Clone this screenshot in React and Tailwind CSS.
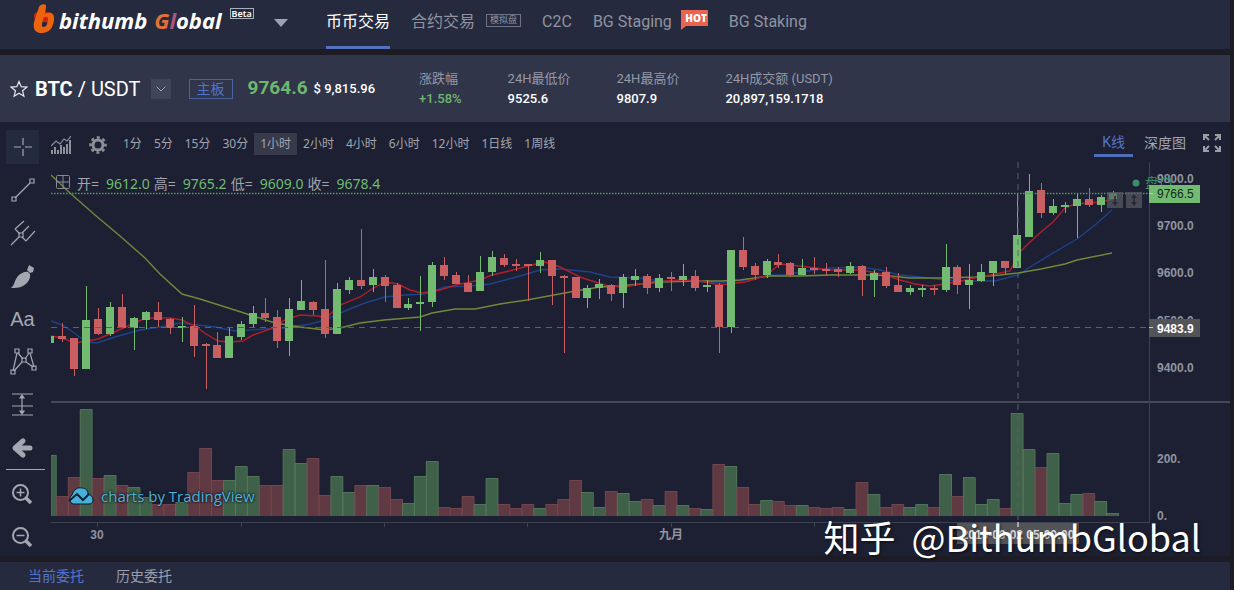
import React, { useState } from 'react'
import { clsx } from 'clsx'

const navFont = 'font-[Roboto,"Noto_Sans_CJK_SC",sans-serif]'
const uiFont = 'font-["Noto_Sans","Noto_Sans_CJK_SC",sans-serif]'

const intervals = ['1分', '5分', '15分', '30分', '1小时', '2小时', '4小时', '6小时', '12小时', '1日线', '1周线']

const stats = [
  { label: '涨跌幅', value: '+1.58%', up: true },
  { label: '24H最低价', value: '9525.6' },
  { label: '24H最高价', value: '9807.9' },
  { label: '24H成交额 (USDT)', value: '20,897,159.1718' },
]

const ohlc = [
  ['开', '9612.0'],
  ['高', '9765.2'],
  ['低', '9609.0'],
  ['收', '9678.4'],
]

// [up, high, low, top, bottom, volume top]
const candles = [
  [1, 336, 343, 336, 343, 455], [0, 323, 342, 336, 339, 496], [0, 338, 376, 338, 369, 477],
  [1, 286, 369, 320, 369, 409], [0, 308, 335, 319, 334, 478], [1, 302, 336, 307, 334, 475],
  [0, 294, 328, 307, 328, 485], [1, 317, 350, 318, 328, 487], [1, 311, 329, 312, 320, 497],
  [0, 302, 327, 312, 320, 504], [0, 318, 334, 319, 328, 504], [1, 317, 342, 326, 328, 502],
  [0, 305, 357, 326, 346, 472], [0, 343, 389, 344, 346, 448], [0, 332, 358, 345, 358, 480],
  [1, 327, 358, 336, 358, 480], [1, 321, 340, 324, 337, 466], [1, 306, 327, 313, 324, 476],
  [0, 298, 322, 313, 318, 485], [0, 310, 348, 317, 341, 485], [1, 298, 356, 309, 341, 449],
  [1, 280, 310, 301, 310, 463], [0, 301, 315, 302, 310, 458], [0, 260, 338, 309, 334, 495],
  [1, 283, 334, 289, 334, 476], [1, 277, 294, 280, 290, 492], [0, 229, 289, 280, 286, 485],
  [1, 269, 292, 277, 285, 485], [0, 275, 302, 277, 286, 487], [0, 283, 308, 285, 308, 499],
  [1, 298, 310, 304, 308, 503], [1, 276, 331, 302, 304, 476], [1, 262, 307, 265, 302, 461],
  [0, 257, 280, 265, 276, 507], [0, 272, 284, 275, 284, 508], [0, 275, 292, 283, 292, 496],
  [1, 256, 291, 272, 291, 504], [1, 251, 276, 257, 272, 478], [0, 254, 267, 258, 265, 504],
  [0, 259, 271, 264, 266, 508], [0, 264, 301, 264, 266, 504], [1, 252, 273, 260, 266, 508],
  [0, 260, 305, 260, 276, 504], [0, 275, 353, 276, 278, 499], [0, 277, 298, 277, 298, 480],
  [1, 285, 308, 288, 298, 492], [1, 279, 299, 284, 288, 507], [0, 284, 301, 285, 294, 491],
  [1, 274, 308, 277, 293, 493], [1, 269, 286, 276, 280, 501], [0, 274, 294, 276, 288, 499],
  [1, 274, 292, 278, 288, 505], [0, 272, 291, 277, 279, 491], [1, 264, 286, 276, 280, 505],
  [0, 270, 291, 276, 288, 508], [1, 280, 292, 285, 287, 509], [0, 283, 353, 285, 327, 464],
  [1, 250, 333, 250, 327, 466], [0, 237, 270, 250, 267, 487], [0, 263, 280, 266, 275, 504],
  [1, 259, 278, 261, 275, 500], [0, 254, 268, 262, 265, 501], [0, 262, 277, 263, 275, 505],
  [1, 259, 275, 268, 275, 505], [0, 257, 274, 268, 270, 507], [0, 263, 276, 269, 271, 508],
  [0, 267, 277, 269, 272, 507], [1, 262, 274, 266, 273, 509], [0, 265, 296, 266, 280, 482],
  [1, 270, 297, 273, 280, 494], [0, 267, 288, 272, 286, 507], [0, 273, 292, 285, 292, 504],
  [1, 285, 295, 288, 292, 507], [1, 285, 297, 288, 289, 504], [0, 285, 295, 288, 290, 507],
  [1, 244, 292, 267, 290, 474], [0, 265, 294, 267, 285, 496], [1, 264, 309, 280, 285, 477],
  [1, 264, 282, 272, 281, 504], [1, 261, 286, 261, 273, 499], [0, 261, 275, 261, 268, 508],
  [1, 193, 268, 235, 268, 413], [1, 174, 237, 191, 237, 449], [0, 183, 218, 190, 213, 467],
  [1, 199, 215, 206, 213, 453], [1, 202, 213, 205, 207, 503], [1, 193, 238, 199, 206, 494],
  [0, 188, 207, 199, 205, 493], [1, 195, 212, 197, 205, 501], [1, 191, 199, 193, 199, 513],
]

const slow = '51,175 70,193 95,215 120,236 145,258 160,274 182,294 200,299 241,312 253,316 275,323 300,327 325,330 340,328 360,323 384,320 420,317 432,313 455,309 475,309 500,304 527,300 570,292 600,287 620,286 660,282 700,281 720,281 740,280 770,276 800,276 830,275 874,275 890,276 910,278 940,278 975,277 1000,275 1018,273 1041,269 1065,264 1077,260 1112,253'
const fast = '51,336 62,338 75,343 98,339 110,334 130,325 146,318 170,318 182,320 195,326 206,334 218,341 230,342 243,341 253,335 270,329 285,320 300,315 318,316 326,318 340,305 360,297 372,289 385,282 398,284 410,290 422,293 440,290 456,285 480,280 492,275 505,272 528,266 545,262 560,267 580,277 592,281 608,286 625,287 650,282 680,280 700,281 720,285 745,282 765,276 780,264 800,266 830,270 860,270 872,272 885,275 900,280 915,284 930,286 945,284 975,278 995,274 1010,271 1020,252 1029,243 1041,232 1053,222 1065,208 1075,204 1101,202 1113,199'
const mid = '51,321 62,325 73,332 85,341 97,343 115,337 140,330 160,327 180,323 215,327 235,331 265,329 285,328 310,324 325,320 345,311 365,303 385,297 405,295 425,294 445,287 470,286 490,284 520,276 540,270 560,269 590,272 610,277 640,278 660,281 690,281 720,283 745,280 770,275 785,275 800,272 830,268 860,267 880,270 900,275 920,277 945,280 965,281 995,281 1018,275 1030,267 1053,253 1077,239 1095,225 1112,210'

const xAt = (i) => 50.4 + i * 11.935

const tools = [
  { name: '十字线', icon: <path d="M14 5v7M14 16v7M5 14h7M16 14h7" /> },
  { name: '趋势线', icon: <><path d="M6 22 21 7" /><path d="M3 21h4v4H3zM21 3h4v4h-4z" /></> },
  { name: '叉形线', icon: <><path d="M2 26l8-8M13 14l7-7M6 10l9-8M6 10l5 5M13 18l4 4 9-10" /><path d="M10 14h4v4h-4z" /></> },
  { name: '画笔', icon: <><path fill="currentColor" stroke="none" d="M2 26c4-3 3-8 8-13 3-2 6-4 9-3l2 2c1 4-2 9-7 12-4 2-8 2-12 2z" /><path fill="currentColor" stroke="none" d="M18 8l2-5 5 3-1 4-3 1z" /></> },
  { name: '文字' },
  { name: '形态', icon: <><path d="M8 5 4 23M9 5l5 6M20 5l-4 6M21 5l4 14M17 14l7 5M13 14l-8 9" /><path d="M6 1h4v4H6zM19 1h4v4h-4zM13 10h4v4h-4zM2 22h4v4H2zM23 18h4v4h-4z" /></> },
  { name: '测量', icon: <><path d="M3 3h21M3 15h21M3 24h21M13 5v17" /><path fill="currentColor" d="M13 4l2 3h-4zM13 23l2-3h-4z" /></> },
  { name: '返回', icon: <path strokeWidth="5" strokeLinecap="round" strokeLinejoin="round" d="M14 7l-8 7 8 7M7 14h14" /> },
]

function ToolIcon({ children }) {
  return (
    <svg width="28" height="28" viewBox="0 0 28 28" fill="none" stroke="currentColor" strokeWidth="1.2" aria-hidden="true">
      {children}
    </svg>
  )
}

function Logo() {
  return (
    <a href="#" className="flex items-center" aria-label="bithumb Global">
      <svg width="22" height="30" viewBox="0 0 22 30" aria-hidden="true">
        <path d="M1 12c0-4 4-4 9-4s12 0 11 7c-1 5-6 3-11 3S1 17 1 12z" fill="#d3200f" />
        <path fillRule="evenodd" d="M6 3c1-3 8-4 7 0l-1 7c5-3 10-1 9 6-1 8-5 13-12 13-8 0-9-5-8-11zM10 15l-1 5c-1 4 4 4 5 0l1-4c1-4-4-4-5-1z" fill="#ec6310" />
      </svg>
      <span className="ml-1 mt-0.5 flex gap-[7px] font-['Open_Sans',sans-serif] text-[22px] leading-7 font-bold italic text-white">
        <span>bithumb</span>
        <span><span className="text-[#e2703a]">G</span><span className="text-[#a9587a]">l</span>obal</span>
      </span>
      <span className="mb-3 ml-2 border border-[#a9aebb] px-px font-['Noto_Sans',sans-serif] text-[9px] leading-[9px] font-semibold text-white">Beta</span>
    </a>
  )
}

function Header() {
  return (
    <header className="flex h-[49px] items-start bg-[#262a3e] pl-[33px]">
      <div className="flex w-[293px] items-center pt-1">
        <Logo />
        <button aria-label="切换站点" className="mt-2 ml-5">
          <svg width="14" height="8" viewBox="0 0 14 8" className="fill-[#9da2b0]"><path d="M0 0h14L7 8z" /></svg>
        </button>
      </div>
      <nav className={clsx('flex h-[49px] text-base leading-6 text-[#8f93a1]', navFont)}>
        <a href="#" className="border-b-[3px] border-[#5272c0] pt-2.5 text-white">币币交易</a>
        <a href="#" className="ml-[21px] flex items-start pt-2.5">
          合约交易
          <span className="mt-1 ml-[11px] border border-[#6e7383] px-[3px] text-[9px] leading-[11px]">模拟盘</span>
        </a>
        <a href="#" className="ml-[21px] pt-2.5">C2C</a>
        <a href="#" className="ml-[21px] flex items-start pt-2.5">
          BG Staging
          <span className="relative ml-[9px] flex h-5 w-[27px] justify-end">
            <svg className="absolute inset-0" width="27" height="20" viewBox="0 0 27 20" aria-hidden="true"><path d="M0 0h27v16H5l-5 4z" fill="#ea6351" /></svg>
            <span className="relative pr-px font-['Open_Sans',sans-serif] text-[10px] leading-4 font-extrabold text-white">HOT</span>
          </span>
        </a>
        <a href="#" className="ml-[21px] pt-2.5">BG Staking</a>
      </nav>
    </header>
  )
}

function Ticker() {
  return (
    <section className={clsx('flex h-[67px] items-center bg-[#30354a] pl-2.5 text-white', navFont)}>
      <button aria-label="收藏">
        <svg width="18" height="18" viewBox="0 0 18 18" fill="none" stroke="#e3e5ea" strokeWidth="1.2"><path d="M9 1.5l2.2 5.2 5.6.4-4.300 3.600 1.400 5.500L9 13.200l-4.900 3 1.400-5.500L1.200 7.100l5.600-.4z" /></svg>
      </button>
      <h1 className="ml-[7px] text-xl whitespace-pre"><b>BTC</b> / USDT</h1>
      <button aria-label="选择交易对" className="ml-2.5 flex size-5 items-center justify-center bg-[#404559]">
        <svg width="10" height="6" viewBox="0 0 10 6" fill="none" stroke="#9ba0ae"><path d="M.5.5 5 5 9.500.5" /></svg>
      </button>
      <span className="ml-[18px] border border-[#4a649f] px-[7px] text-sm leading-[18px] text-[#5474cb]">主板</span>
      <strong className="ml-[15px] text-[19px] font-bold text-[#6fb76f]">9764.6</strong>
      <span className="ml-1.5 text-[13px] font-medium">$ 9,815.96</span>
      <dl className="ml-11 flex gap-[46px] text-[13px] leading-5">
        {stats.map(s => (
          <div key={s.label}>
            <dt className="text-[#9499a8]">{s.label}</dt>
            <dd className={clsx('font-medium', s.up && 'text-[#6fb76f]')}>{s.value}</dd>
          </div>
        ))}
      </dl>
    </section>
  )
}

function ToolColumn() {
  return (
    <div className="flex w-[51px] shrink-0 flex-col pt-[3px] pr-1.5 text-[#a4a7b1]">
      {tools.map((t, i) => (
        <button key={t.name} aria-label={t.name} className="flex h-[43px] items-center pl-1.5">
          <span className={clsx('flex h-[34px] w-[33px] items-center justify-center', i === 0 && 'bg-[#252b3f]')}>
            {t.icon ? <ToolIcon>{t.icon}</ToolIcon> : <span className="font-['Liberation_Sans',Arial,sans-serif] text-xl leading-6">Aa</span>}
          </span>
        </button>
      ))}
      <hr className="ml-1.5 border-[#a4a7b1]" />
      {['放大', '缩小'].map((name, i) => (
        <button key={name} aria-label={name} className="flex h-[43px] items-center pt-1 pl-[11px]">
          <svg width="22" height="22" viewBox="0 0 22 22" fill="none" stroke="currentColor" aria-hidden="true">
            <circle cx="9.500" cy="9.500" r="7.500" strokeWidth="2" />
            <path d="M15 15l5 5" strokeWidth="3.500" />
            <path d={i === 0 ? 'M5.500 9.500h8M9.500 5.500v8' : 'M5.500 9.500h8'} strokeWidth="1.500" />
          </svg>
        </button>
      ))}
    </div>
  )
}

function Toolbar() {
  const [active, setActive] = useState('1小时')
  return (
    <div className={clsx('flex h-[38px] items-center text-xs text-[#a2a5b0]', uiFont)}>
      <button aria-label="指标" className="mt-2">
        <svg width="20" height="19" viewBox="0 0 20 19" fill="none" stroke="#8d9099" aria-hidden="true">
          <path d="M1 18v-4M4 18v-7M7 18v-4M10 18V9M13 18v-7M16 18V8M19 18V4" strokeWidth="2" />
          <path d="M0 10l5-5 4 3 4-5 3 2 4-5" strokeWidth="1.200" />
        </svg>
      </button>
      <button aria-label="设置" className="mt-2 mr-2.5 ml-[18px]">
        <svg width="18" height="18" viewBox="0 0 18 18" fill="none" stroke="#8d9099" aria-hidden="true">
          <circle cx="9" cy="9" r="5" strokeWidth="3" />
          <circle cx="9" cy="9" r="7.500" strokeWidth="2.500" strokeDasharray="3 2.890" strokeDashoffset="1.500" />
        </svg>
      </button>
      <div className="flex pt-1.5">
        {intervals.map(v => (
          <button key={v} onClick={() => setActive(v)} className={clsx('h-[22px] px-1.5', active === v && 'bg-[#363a4a]')}>
            {v}
          </button>
        ))}
      </div>
      <div className={clsx('mr-2 ml-auto flex items-center pt-1 text-sm', navFont)}>
        <button className="border-b-[3px] border-[#4f6db8] px-2 leading-6 text-[#5474cb]">K线</button>
        <button className="ml-[11px] leading-6 text-[#a2a5b0]">深度图</button>
        <button aria-label="全屏" className="ml-4">
          <svg width="20" height="20" viewBox="0 0 20 20" fill="none" stroke="#9a9da6" strokeWidth="2" aria-hidden="true">
            <path d="M2 7V2h5M2 2l5 5M13 2h5v5M18 2l-5 5M2 13v5h5M2 18l5-5M13 18h5v-5M18 18l-5-5" />
          </svg>
        </button>
      </div>
    </div>
  )
}

function Chart() {
  return (
    <svg viewBox="51 160 1179 396" className="block h-auto w-full font-['Liberation_Sans',Arial,'Noto_Sans_CJK_SC',sans-serif]" role="img" aria-label="BTC/USDT 1小时 K线">
      <g shapeRendering="crispEdges">
        {candles.map(([up, , , , , v], i) => {
          const x = Math.max(51, xAt(i) - 6)
          const w = xAt(i) + 6 - x
          return <rect key={i} x={x} y={v} width={w} height={516 - v} fill={up ? '#3f6149' : '#603a43'} />
        })}
      </g>
      <g fill="none" strokeWidth="1">
        {candles.map(([up, , , , , v], i) => {
          const x = Math.max(51, xAt(i) - 6)
          return <path key={i} d={`M${x} 516V${v + 0.5}H${xAt(i) + 6}V516`} stroke={up ? '#54795b' : '#764650'} strokeOpacity="0.8" />
        })}
      </g>

      <g fill="none" strokeWidth="1.400">
        <polyline points={mid} stroke="#1d4289" />
        <polyline points={slow} stroke="#6f8839" />
        <polyline points={fast} stroke="#b01e2b" />
      </g>
      {candles.map(([up, high, low, top, bottom], i) => {
        const x = Math.round(xAt(i))
        const left = Math.max(51, x - 4)
        return (
          <g key={i} fill={up ? '#72bb70' : '#c95f60'} shapeRendering="crispEdges">
            {i > 0 && <rect x={x} y={high} width="1" height={low - high} />}
            <rect x={left} y={top} width={i === 0 ? 3 : 8} height={Math.max(2, bottom - top)} />
          </g>
        )
      })}

      <path d="M51 193.500H1149" stroke="#5a9467" strokeWidth="1.500" strokeDasharray="1.500 1.500" />
      <path d="M51 327.500H1149" stroke="#5b606f" strokeDasharray="6 5" />
      <path d="M1018 162V522" stroke="#5b606f" strokeDasharray="6 5" />
      <path d="M51 402H1230" stroke="#454a59" strokeWidth="2" />
      <path d="M51 522.500H1150M1149.500 162V522M97.500 522v5M241.500 522v5M384.500 522v5M527.500 522v5M671.500 522v5M814.500 522v5" stroke="#3d4252" />

      <g fill="#5a5c64" fillOpacity="0.7">
        <rect x="1107" y="192" width="16" height="16" />
        <rect x="1126" y="192" width="16" height="16" />
      </g>
      <path d="M1115 196v7M1134 195v10" stroke="#272a36" strokeWidth="1.500" />
      <path d="M1112 202h6l-3 4zM1131 198l3-4 3 4zM1131 202h6l-3 4z" fill="#272a36" />

      <g className="fill-[#9094a0] text-xs font-bold">
        <text x="1157" y="183">9800.0</text>
        <text x="1157" y="230">9700.0</text>
        <text x="1157" y="277">9600.0</text>
        <text x="1157" y="325">9500.0</text>
        <text x="1157" y="372">9400.0</text>
        <text x="1157" y="463">200.</text>
        <text x="1157" y="520">0.</text>
        <text x="97" y="539" textAnchor="middle">30</text>
        <text x="671" y="539" textAnchor="middle">九月</text>
      </g>
      <circle cx="1136" cy="183" r="3.500" fill="#3b8d67" />
      <text x="1145" y="188" className="fill-[#3b8d67] text-sm">盘口</text>
      <rect x="1149" y="185" width="51" height="18" fill="#72bb70" />
      <text x="1157" y="198" className="fill-[#16281c] text-xs">9766.5</text>
      <rect x="1149" y="319" width="51" height="18" fill="#535457" />
      <text x="1157" y="333" className="fill-white text-xs font-bold">9483.9</text>
      <path d="M1149 193.500h4M1149 327.500h4" stroke="#c5c7cc" />
      <rect x="957" y="523" width="122" height="21" fill="#535457" />
      <text x="1018" y="539" textAnchor="middle" className="fill-[#dcdde0] text-xs font-bold">2019-09-02 05:00:00</text>
      <path d="M1018 522v5" stroke="#fff" />
    </svg>
  )
}

function Legend() {
  return (
    <div className={clsx('absolute top-3 left-1 flex items-center text-sm leading-6 text-[#a2a5b0]', uiFont)}>
      <svg width="16" height="16" viewBox="0 0 16 16" fill="none" stroke="#858994" className="mr-1.5 mb-1" aria-hidden="true">
        <rect x="1.500" y="1.500" width="13" height="13" rx="1" />
        <path d="M8 2v12M2 8h12" />
      </svg>
      {ohlc.map(([k, v]) => (
        <span key={k} className="mr-1 flex gap-[7px]">{k}=<span className="text-[#72bb70]">{v}</span></span>
      ))}
    </div>
  )
}

function Attribution() {
  return (
    <a href="#" className="absolute bottom-12 left-[15px] flex items-center gap-[7px] font-['Open_Sans',sans-serif] text-[15px] leading-6 text-[#4fb2d8] [text-shadow:0_0_3px_#10131f,0_0_2px_#10131f]">
      <svg width="28" height="20" viewBox="0 0 28 20" aria-hidden="true">
        <path d="M7 18a5 5 0 0 1-1-9C8 3 12 1 16 2c4 0 6 3 6 6 3 1 5 3 5 6s-2 4-4 4z" fill="#45b1dc" stroke="#111827" />
        <path d="M3 15l8-7 6 6 6-6" fill="none" stroke="#14202e" strokeWidth="2" />
      </svg>
      charts by TradingView
    </a>
  )
}

export default function App() {
  const [tab, setTab] = useState('当前委托')
  return (
    <div className="min-h-screen bg-[#1d1c24] pr-1">
      <Header />
      <main className="mt-1.5">
        <Ticker />
        <section className="flex bg-[#1c2032]">
          <ToolColumn />
          <div className="min-w-0 flex-1">
            <Toolbar />
            <div className="relative">
              <Chart />
              <Legend />
              <Attribution />
              <p className="absolute right-[29px] bottom-0.5 flex gap-4 font-['Noto_Sans_CJK_SC',sans-serif] text-4xl leading-9 text-white [text-shadow:1px_1px_3px_#000a]"><span>知乎</span><span>@BithumbGlobal</span></p>
            </div>
          </div>
        </section>
        <div className={clsx('mt-1.5 flex h-7 items-center gap-8 bg-[#262a3e] pl-7 text-sm', navFont)}>
          {['当前委托', '历史委托'].map(t => (
            <button key={t} onClick={() => setTab(t)} className={tab === t ? 'text-[#5474cb]' : 'text-[#9a9ead]'}>{t}</button>
          ))}
        </div>
      </main>
    </div>
  )
}
